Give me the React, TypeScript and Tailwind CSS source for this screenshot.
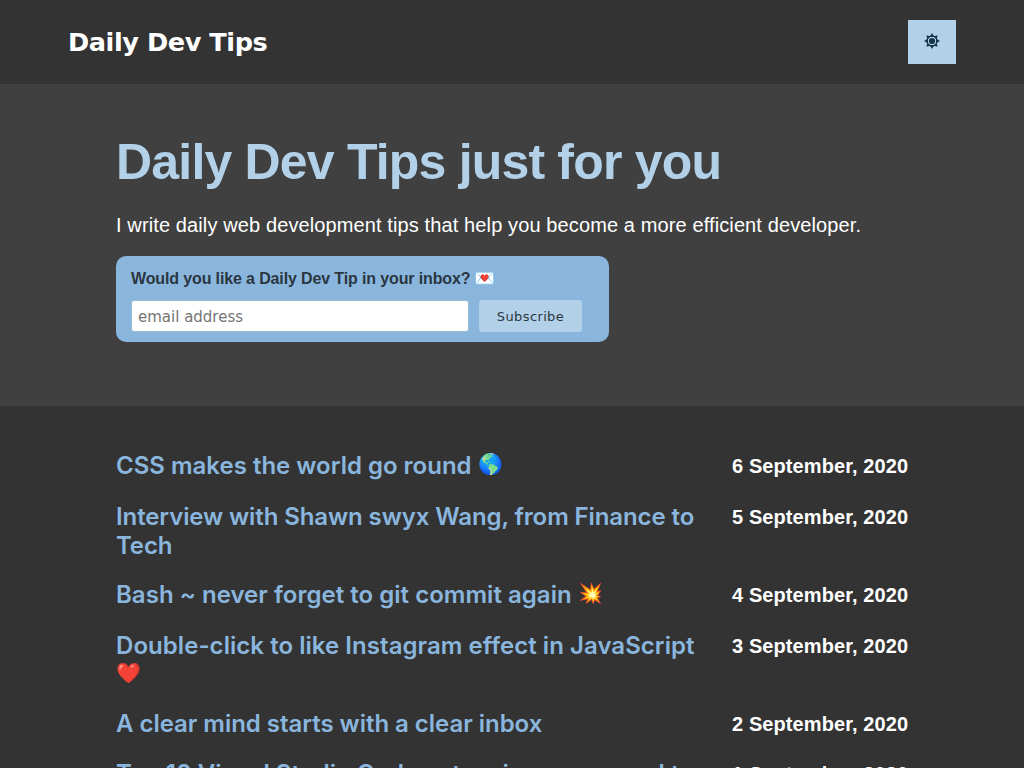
type Post = { title: string; emoji?: string; date: string; height: string; tracking: string };

const posts: Post[] = [
  { title: 'CSS makes the world go round', emoji: '🌎', date: '6 September, 2020', height: 'h-[51px]', tracking: 'tracking-normal' },
  { title: 'Interview with Shawn swyx Wang, from Finance to Tech', date: '5 September, 2020', height: 'h-[78px]', tracking: 'tracking-[-0.1px]' },
  { title: 'Bash ~ never forget to git commit again', emoji: '💥', date: '4 September, 2020', height: 'h-[51px]', tracking: 'tracking-[0.03px]' },
  { title: 'Double-click to like Instagram effect in JavaScript', emoji: '❤️', date: '3 September, 2020', height: 'h-[78px]', tracking: 'tracking-[0.05px]' },
  { title: 'A clear mind starts with a clear inbox', date: '2 September, 2020', height: 'h-[50px]', tracking: 'tracking-[-0.03px]' },
  { title: 'Top 10 Visual Studio Code extensions you need to install', date: '1 September, 2020', height: 'h-[78px]', tracking: 'tracking-[0.03px]' },
];

function SunIcon() {
  return (
    <svg width="16" height="16" viewBox="0 0 16 16" fill="#193549" className="-mt-0.5">
      {[0, 45, 90, 135, 180, 225, 270, 315].map((a) => (
        <path key={a} d="M8 0 10.3 4H5.7z" transform={`rotate(${a} 8 8)`} />
      ))}
      <circle cx="8" cy="8" r="4.9" fill="none" stroke="#193549" strokeWidth="1.5" />
      <circle cx="8" cy="8" r="4.1" fill="#b2d1e9" />
      <circle cx="8" cy="8" r="3.1" />
    </svg>
  );
}

export default function App() {
  return (
    <div className="h-screen overflow-hidden bg-[#333] font-['Liberation_Sans',sans-serif] text-white">
      <header className="flex h-[84px] items-center justify-between px-[68px]">
        <a className="font-['DejaVu_Sans',sans-serif] text-[25.6px] font-bold tracking-[-0.45px]">Daily Dev Tips</a>
        <button aria-label="Toggle theme" className="flex h-11 w-12 items-center justify-center bg-[#b2d1e9]">
          <SunIcon />
        </button>
      </header>
      <section className="h-[322px] bg-[#404040] px-[116px] pt-[48px]">
        <h1 className="text-[50px] leading-[60px] font-bold tracking-[-0.81px] whitespace-nowrap text-[#b2d1e9]">Daily Dev Tips just for you</h1>
        <p className="mt-[19px] text-xl leading-[28px] tracking-[0.115px] whitespace-nowrap">
          I write daily web development tips that help you become a more efficient developer.
        </p>
        <form className="mt-[17px] h-[86px] w-[493px] rounded-[10px] bg-[#8ab6de] px-[15px] pt-[12px]">
          <label className="flex h-[22px] items-center text-base font-bold text-[#2b3640]">
            <span className="tracking-[-0.13px] whitespace-nowrap">Would you like a Daily Dev Tip in your inbox?</span>
            <span className="ml-1 text-[17px]">💌</span>
          </label>
          <div className="mt-[10px] flex items-center gap-[10px]">
            <input
              className="h-[32px] w-[338px] rounded-[3px] border border-[#9dbbd5] bg-white px-[6px] pt-[2px] font-['DejaVu_Sans',sans-serif] text-[15px] placeholder:text-[#757575]"
              placeholder="email address"
            />
            <button type="button" className="h-8 w-[103px] rounded-[3px] bg-[#b2d1e9] pt-[2px] font-['DejaVu_Sans',sans-serif] text-[13px] tracking-[0.38px] text-[#2b3640]">
              Subscribe
            </button>
          </div>
        </form>
      </section>
      <main className="px-[116px] pt-[45px]">
        {posts.map((post) => (
          <article key={post.date} className={`flex items-start justify-between ${post.height}`}>
            <h2 className={`w-[592px] font-['Inter',sans-serif] text-2xl leading-[29px] font-semibold text-[#8ab6de] ${post.tracking}`}>
              {post.title}
              {post.emoji && <> <span className="inline-block h-[29px] align-top text-[20px] leading-[26px]">{post.emoji}</span></>}
            </h2>
            <time className="w-[176px] text-xl leading-[30px] font-bold tracking-[0.1px] whitespace-nowrap">{post.date}</time>
          </article>
        ))}
      </main>
    </div>
  );
}
